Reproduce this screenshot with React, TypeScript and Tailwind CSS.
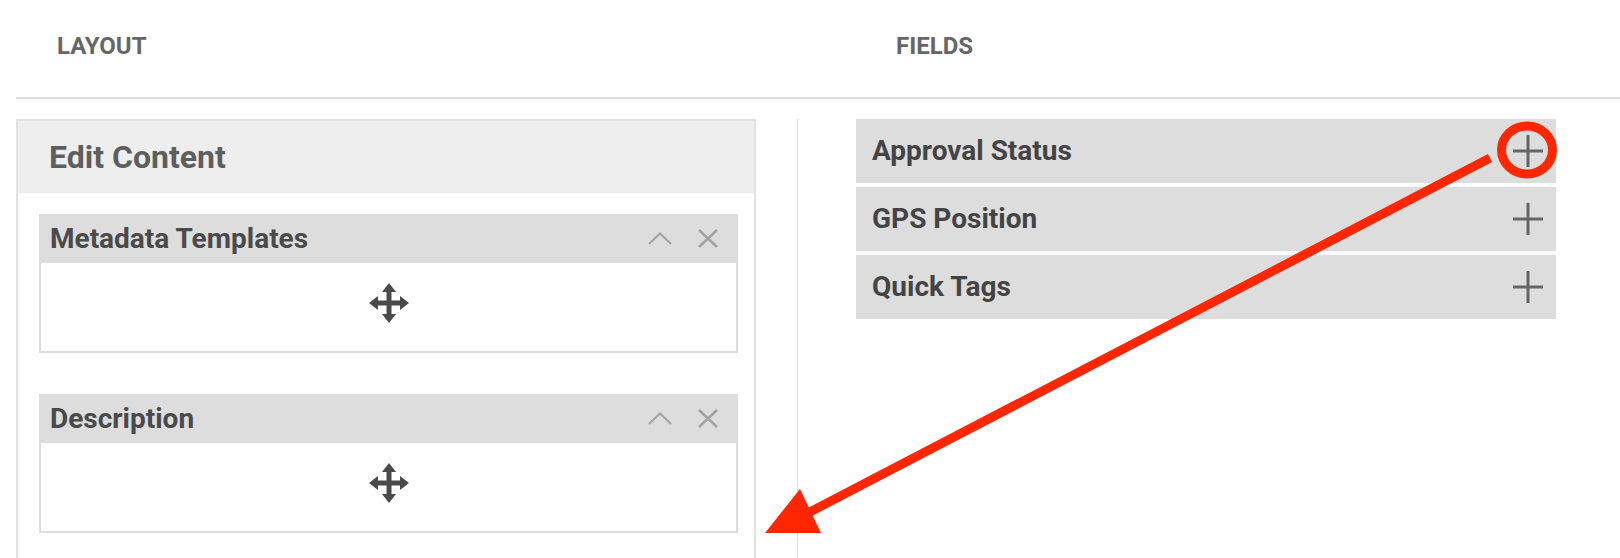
import React from 'react'

const fields = ['Approval Status', 'GPS Position', 'Quick Tags']
const cards = ['Metadata Templates', 'Description']

function MoveIcon() {
  return (
    <svg width="40" height="40" viewBox="0 0 40 40" fill="#4a4a4a">
      <rect x="17.5" y="8" width="5" height="24" />
      <rect x="8" y="17.5" width="24" height="5" />
      <polygon points="20,0 27,9 13,9" />
      <polygon points="20,40 27,31 13,31" />
      <polygon points="0,20 9,13 9,27" />
      <polygon points="40,20 31,13 31,27" />
    </svg>
  )
}

function PlusIcon() {
  return (
    <svg width="30" height="32" viewBox="0 0 30 32" stroke="#666" strokeWidth="3">
      <line x1="0" y1="16" x2="30" y2="16" />
      <line x1="15" y1="0" x2="15" y2="32" />
    </svg>
  )
}

function Card({ title }: { title: string }) {
  return (
    <div className="ml-[21px] mr-[16px]">
      <div className="h-[49px] bg-[#dddddd] flex items-center justify-between pl-[11px] pr-[20px]">
        <span className="text-[28px] font-bold text-[#4a4a4a] leading-none">{title}</span>
        <div className="flex items-center gap-[26px]">
          <svg width="24" height="13" viewBox="0 0 24 13" fill="none" stroke="#a3a3a3" strokeWidth="2">
            <polyline points="1,12 12,1.5 23,12" />
          </svg>
          <svg width="20" height="19" viewBox="0 0 20 19" stroke="#a3a3a3" strokeWidth="2.5">
            <line x1="1" y1="1" x2="19" y2="18" />
            <line x1="19" y1="1" x2="1" y2="18" />
          </svg>
        </div>
      </div>
      <div className="h-[90px] border-2 border-t-0 border-[#dddddd] flex justify-center items-center pb-[8px]">
        <MoveIcon />
      </div>
    </div>
  )
}

export default function App() {
  return (
    <div className="relative w-[1620px] h-[558px] overflow-hidden bg-white font-['Roboto','Liberation_Sans',sans-serif]">
      <div className="ml-[16px] h-[99px] border-b-2 border-[#dddddd] flex pt-[34px] text-[24px] font-bold text-[#666] leading-none">
        <div className="w-[880px] pl-[41px]">LAYOUT</div>
        <div>FIELDS</div>
      </div>

      <div className="flex ml-[16px] mt-[20px] h-[439px]">
        <div className="w-[740px] border-2 border-b-0 border-[#e2e2e2]">
          <div className="h-[72px] bg-[#eeeeee] flex items-center pl-[31px]">
            <span className="text-[32px] font-bold text-[#5e5e5e] leading-none">Edit Content</span>
          </div>
          <div className="pt-[21px] flex flex-col gap-[41px]">
            {cards.map(c => (
              <Card key={c} title={c} />
            ))}
          </div>
        </div>

        <div className="ml-[41px] border-l border-[#dddddd] pl-[58px]">
          <div className="w-[700px] flex flex-col gap-[4px]">
            {fields.map(f => (
              <div key={f} className="h-[64px] bg-[#dddddd] flex items-center justify-between pl-[16px] pr-[13px]">
                <span className="text-[28px] font-bold text-[#444] leading-none">{f}</span>
                <PlusIcon />
              </div>
            ))}
          </div>
        </div>
      </div>

      <svg className="absolute inset-0 pointer-events-none" width="1620" height="558" viewBox="0 0 1620 558">
        <ellipse cx="1527" cy="150" rx="25.5" ry="24" fill="none" stroke="#ff2600" strokeWidth="9" />
        <line x1="1490" y1="158" x2="806" y2="514" stroke="#ff2600" strokeWidth="9" />
        <polygon points="765,533 800,489 821,533" fill="#ff2600" />
      </svg>
    </div>
  )
}
